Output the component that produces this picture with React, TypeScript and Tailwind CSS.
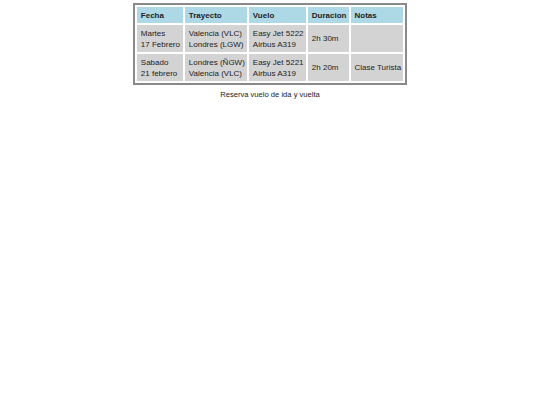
import React from "react";

export default function App() {
  const rows = [
    ["Martes\n17 Febrero", "Valencia (VLC)\nLondres (LGW)", "Easy Jet 5222\nAirbus A319", "2h 30m", ""],
    ["Sabado\n21 febrero", "Londres (ÑGW)\nValencia (VLC)", "Easy Jet 5221\nAirbus A319", "2h 20m", "Clase Turista"],
  ];
  const heads = ["Fecha", "Trayecto", "Vuelo", "Duracion", "Notas"];
  const widths = ["w-[46px]", "w-[60px]", "w-[57px]", "w-[40px]", "w-[51px]"];
  return (
    <div className="w-[540px] h-[405px] bg-white pt-[3px]" style={{ fontFamily: '"Liberation Sans", Arial, sans-serif' }}>
      <table className="mx-auto border-separate border-spacing-[2.5px] border-[2px] border-[#8a8a8a] text-[8px] leading-[11px] text-[#222]">
        <thead>
          <tr>
            {heads.map((h, j) => (
              <th key={h} className={`${widths[j]} bg-[#add8e6] text-left font-bold pl-[4px] pr-[2px] py-[2.5px] align-middle`}>
                {h}
              </th>
            ))}
          </tr>
        </thead>
        <tbody>
          {rows.map((r, i) => (
            <tr key={i}>
              {r.map((c, j) => (
                <td key={j} className="bg-[#d3d3d3] pl-[4px] pr-[2px] py-[2.5px] align-middle whitespace-pre">
                  {c}
                </td>
              ))}
            </tr>
          ))}
        </tbody>
      </table>
      <div className="text-center text-[7.6px] leading-[11px] mt-[4px] text-[#222]">Reserva vuelo de ida y vuelta</div>
    </div>
  );
}
